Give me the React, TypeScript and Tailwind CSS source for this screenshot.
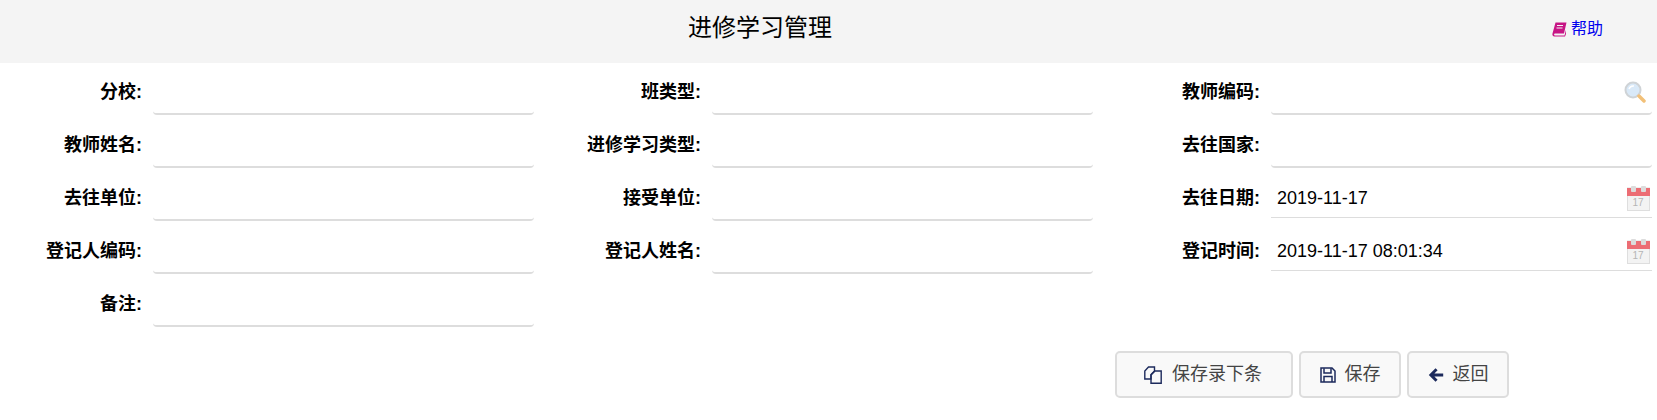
interface FieldProps {
  label: string;
  value?: string;
  icon?: "search" | "date";
}

const SearchIcon = () => (
  <svg width="22" height="22" viewBox="0 0 22 22" className="absolute right-[6px] top-[18px]">
    <circle cx="9" cy="9" r="7.5" fill="#d9e9f8" stroke="#cfd3d6" strokeWidth="2" />
    <path d="M5 8a4.5 4.5 0 0 1 5-3" fill="none" stroke="#ffffff" strokeWidth="1.5" />
    <path d="M15 15l5 5" stroke="#f2c078" strokeWidth="3.5" strokeLinecap="round" />
  </svg>
);

const CalendarIcon = () => (
  <svg width="23" height="25" viewBox="0 0 23 25" className="absolute right-[2px] top-[17px]">
    <rect x="0.5" y="2" width="22" height="22.5" fill="#f3f3f3" stroke="#dedede" />
    <rect x="0" y="2" width="23" height="8" fill="#ec6d74" />
    <rect x="4" y="0" width="5" height="6" rx="1" fill="#dcdcdc" />
    <rect x="14" y="0" width="5" height="6" rx="1" fill="#dcdcdc" />
    <text x="11" y="20" fontSize="10" fill="#b5b5b5" textAnchor="middle" fontFamily="Liberation Sans">
      17
    </text>
  </svg>
);

const BookIcon = () => (
  <svg width="15" height="15" viewBox="0 0 15 15">
    <path
      d="M3.5 0.5H14.5L12 11.5H3C1.8 11.5 1.8 13.5 3 13.5H12.5L14 8V12L13 14.5H2.5C0.8 14.5 0 13 0.5 11.5z"
      fill="#c71585"
    />
    <path d="M5 3.5H11M4.5 6H10.5" stroke="#f4f4f4" strokeWidth="1.2" />
  </svg>
);

const CopyIcon = () => (
  <svg width="18" height="18" viewBox="0 0 18 18" fill="none" stroke="#1c2a5c" strokeWidth="1.4">
    <path d="M4.5 1H10.5V5L7 8.5V13H0.8V5z" />
    <path d="M11 5H17.2V17.2H7V9z" />
  </svg>
);

const SaveIcon = () => (
  <svg width="16" height="16" viewBox="0 0 16 16" fill="none" stroke="#1c2a5c" strokeWidth="1.5">
    <path d="M1 1H12L15 4V15H1z" />
    <path d="M4 1.2V6H11V1.2" />
    <path d="M4 15V9.5H12V15" />
  </svg>
);

const BackIcon = () => (
  <svg width="16" height="16" viewBox="0 0 16 16" fill="#1c2a5c">
    <path d="M7.5 1.2L0.8 8L7.5 14.8L9.6 12.7L6.4 9.6H15.2V6.4H6.4L9.6 3.3z" />
  </svg>
);

const Field = ({ label, value, icon }: FieldProps) => {
  const thin = icon === "date";
  return (
    <div className="flex h-[52px]">
      <label className="w-[142px] shrink-0 pt-[16px] text-right text-[18px] leading-[26px] font-bold text-black">
        {label}:
      </label>
      <div
        className={`relative ml-[11px] w-[381px] ${
          thin ? "h-[49px] border-b border-[#dddddd]" : "rounded-b-sm border-b-2 border-[#dddddd]"
        }`}
      >
        {value && <div className="pt-[16px] pl-[6px] text-[18px] leading-[26px] text-black">{value}</div>}
        {icon === "search" && <SearchIcon />}
        {icon === "date" && <CalendarIcon />}
      </div>
    </div>
  );
};

const App = () => {
  const rows: FieldProps[][] = [
    [{ label: "分校" }, { label: "班类型" }, { label: "教师编码", icon: "search" }],
    [{ label: "教师姓名" }, { label: "进修学习类型" }, { label: "去往国家" }],
    [{ label: "去往单位" }, { label: "接受单位" }, { label: "去往日期", value: "2019-11-17", icon: "date" }],
    [{ label: "登记人编码" }, { label: "登记人姓名" }, { label: "登记时间", value: "2019-11-17 08:01:34", icon: "date" }],
    [{ label: "备注" }],
  ];

  return (
    <div className="min-h-[420px] w-[1657px] overflow-hidden bg-white font-['Liberation_Sans','Noto_Sans_CJK_SC',sans-serif]">
      <div className="flex h-[63px] items-start bg-[#f4f4f4]">
        <h1 className="ml-[688px] text-[24px] leading-[56px] font-normal text-black">进修学习管理</h1>
        <a className="ml-[720px] flex h-[58px] items-center gap-[4px] text-[16px] text-[#0000ee]">
          <BookIcon />
          帮助
        </a>
      </div>

      <div className="grid grid-cols-[559px_559px_539px] gap-y-[1px]">
        {rows.flat().map((f) => (
          <Field key={f.label} {...f} />
        ))}
      </div>

      <div className="mt-[24px] flex justify-end gap-[6px] pr-[148px] text-[18px] text-[#444444]">
        <button className="flex h-[47px] w-[178px] items-center justify-center gap-[10px] rounded-[5px] border-2 border-[#dddddd] bg-[#f9f9f9] pr-[2px]">
          <CopyIcon />
          保存录下条
        </button>
        <button className="flex h-[47px] w-[102px] items-center justify-center gap-[9px] rounded-[5px] border-2 border-[#dddddd] bg-[#f9f9f9]">
          <SaveIcon />
          保存
        </button>
        <button className="flex h-[47px] w-[102px] items-center justify-center gap-[9px] rounded-[5px] border-2 border-[#dddddd] bg-[#f9f9f9]">
          <BackIcon />
          返回
        </button>
      </div>
    </div>
  );
};

export default App;
